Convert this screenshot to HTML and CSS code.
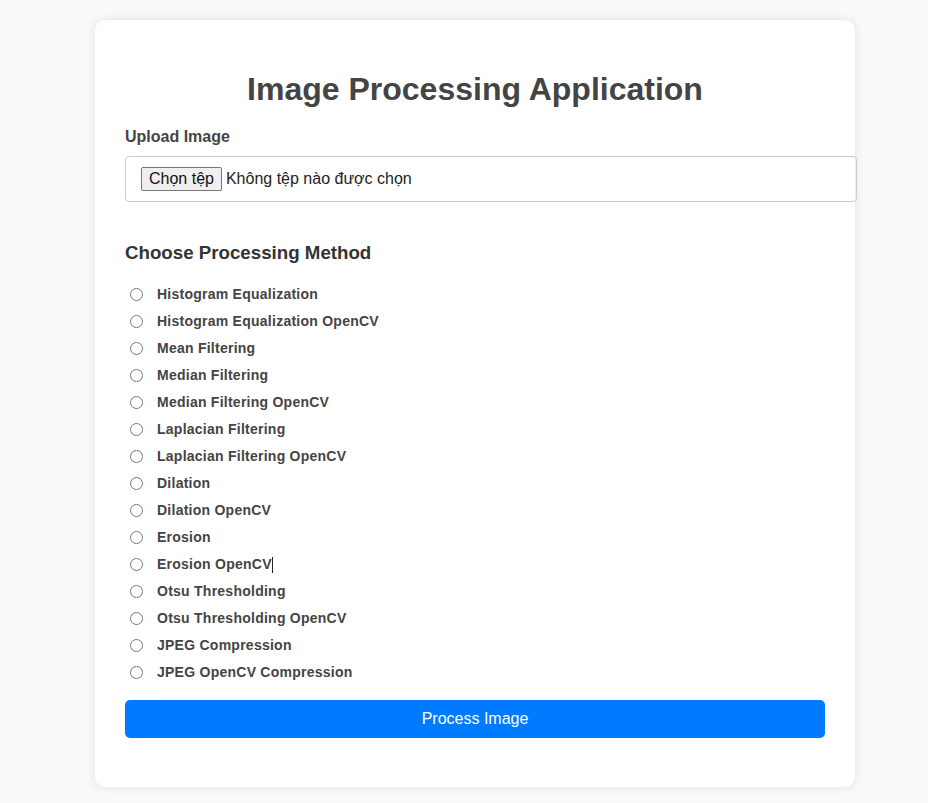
FILE: index.html
```html
<!DOCTYPE html>
<html lang="vi">
<head>
<meta charset="utf-8">
<title>Image Processing Application</title>
<link rel="stylesheet" href="styles.css">
</head>
<body>
<div class="card">
  <h1 class="title">Image Processing Application</h1>
  <form class="form">
    <label class="field-label" for="file">Upload Image</label>
    <label class="file-input">
      <input class="file-native" id="file" type="file">
      <span class="file-button">Chọn tệp</span>
      <span class="file-name">Không tệp nào được chọn</span>
    </label>
    <h3 class="section-title">Choose Processing Method</h3>
    <div class="methods">
      <div class="method"><input type="radio" name="m" id="m1"><label for="m1">Histogram Equalization</label></div>
      <div class="method"><input type="radio" name="m" id="m2"><label for="m2">Histogram Equalization OpenCV</label></div>
      <div class="method"><input type="radio" name="m" id="m3"><label for="m3">Mean Filtering</label></div>
      <div class="method"><input type="radio" name="m" id="m4"><label for="m4">Median Filtering</label></div>
      <div class="method"><input type="radio" name="m" id="m5"><label for="m5">Median Filtering OpenCV</label></div>
      <div class="method"><input type="radio" name="m" id="m6"><label for="m6">Laplacian Filtering</label></div>
      <div class="method"><input type="radio" name="m" id="m7"><label for="m7">Laplacian Filtering OpenCV</label></div>
      <div class="method"><input type="radio" name="m" id="m8"><label for="m8">Dilation</label></div>
      <div class="method"><input type="radio" name="m" id="m9"><label for="m9">Dilation OpenCV</label></div>
      <div class="method"><input type="radio" name="m" id="m10"><label for="m10">Erosion</label></div>
      <div class="method"><input type="radio" name="m" id="m11"><label for="m11">Erosion OpenCV<span class="caret"></span></label></div>
      <div class="method"><input type="radio" name="m" id="m12"><label for="m12">Otsu Thresholding</label></div>
      <div class="method"><input type="radio" name="m" id="m13"><label for="m13">Otsu Thresholding OpenCV</label></div>
      <div class="method"><input type="radio" name="m" id="m14"><label for="m14">JPEG Compression</label></div>
      <div class="method"><input type="radio" name="m" id="m15"><label for="m15">JPEG OpenCV Compression</label></div>
    </div>
    <button class="submit" type="button">Process Image</button>
  </form>
</div>
</body>
</html>
```
FILE: styles.css
```css
html, body {
  margin: 0;
  padding: 0;
}
body {
  background: #f8f9fa;
  font-family: "Liberation Sans", Arial, sans-serif;
  color: #444;
  padding: 20px 0;
}
.card {
  width: 700px;
  margin-left: 95px;
  background: #fff;
  padding: 30px;
  border-radius: 10px;
  box-shadow: 0 0 10px rgba(0, 0, 0, 0.1);
}
.title {
  font-size: 32px;
  font-weight: bold;
  text-align: center;
  color: #444;
  margin: 21px 0 20px;
  line-height: 37px;
}
.form {
  display: flex;
  flex-direction: column;
  align-items: flex-start;
}
.field-label {
  font-size: 16px;
  font-weight: bold;
  line-height: 18px;
  color: #444;
  margin-bottom: 10px;
}
.file-input {
  position: relative;
  display: flex;
  align-items: center;
  width: 700px;
  height: 24px;
  padding: 10px 15px 10px 15px;
  border: 1px solid #ccc;
  border-radius: 4px;
  font-size: 16px;
  color: #222;
  cursor: pointer;
}
.file-native {
  position: absolute;
  width: 1px;
  height: 1px;
  opacity: 0;
  overflow: hidden;
  margin: 0;
}
.file-button {
  box-sizing: border-box;
  height: 24px;
  padding: 0 7px;
  display: flex;
  align-items: center;
  background: #efefef;
  border: 1px solid #767676;
  border-radius: 2px;
  color: #111;
  font-size: 16px;
  margin-right: 4px;
}
.file-name {
  color: #222;
  font-size: 16px;
}
.section-title {
  font-size: 18.72px;
  font-weight: bold;
  color: #333;
  margin: 40px 0 0;
  line-height: 22px;
}
.methods {
  display: flex;
  flex-direction: column;
  margin-top: 22px;
}
.method {
  display: flex;
  align-items: center;
  height: 17px;
  margin-bottom: 10px;
}
.method input {
  margin: 0 0 0 5px;
  width: 13px;
  height: 13px;
}
.method label {
  margin-left: 14px;
  font-size: 14px;
  font-weight: bold;
  letter-spacing: 0.25px;
  color: #444;
  line-height: 17px;
  display: flex;
  align-items: center;
}
.caret {
  display: inline-block;
  width: 1px;
  height: 16px;
  background: #222;
}
.submit {
  width: 700px;
  height: 38px;
  margin-top: 9px;
  margin-bottom: 19px;
  background: #007bff;
  color: #fff;
  border: none;
  border-radius: 5px;
  font-family: "Liberation Sans", Arial, sans-serif;
  font-size: 16px;
}
```
